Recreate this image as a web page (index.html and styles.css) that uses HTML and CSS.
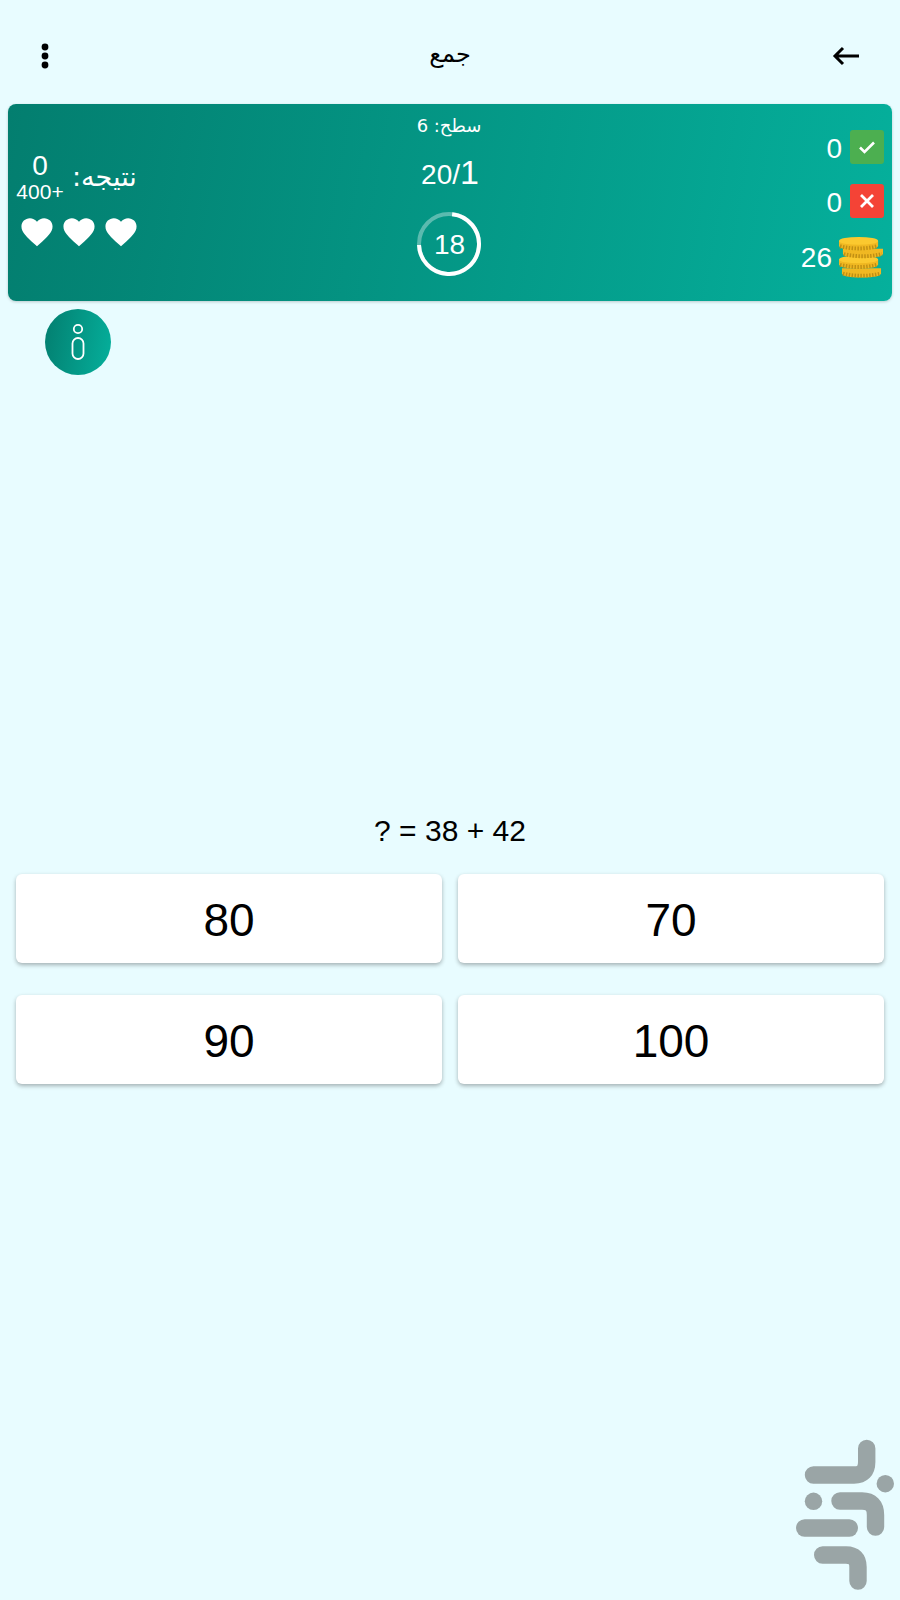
FILE: index.html
```html
<!DOCTYPE html>
<html lang="fa">
<head>
    <meta charset="UTF-8">
    <meta name="viewport" content="width=device-width, initial-scale=1.0">
    <title>جمع</title>
    <link rel="stylesheet" href="styles.css">
</head>
<body>
<div class="page">
    <header class="topbar">
        <svg class="menu-icon" width="10" height="28" viewBox="0 0 10 28">
            <circle cx="5" cy="5" r="3.4"/>
            <circle cx="5" cy="14" r="3.4"/>
            <circle cx="5" cy="23" r="3.4"/>
        </svg>
        <h1 class="title">جمع</h1>
        <svg class="back-icon" width="28" height="22" viewBox="0 0 28 22">
            <path d="M27 11H3M11 3l-8 8 8 8" fill="none" stroke="#000" stroke-width="3"/>
        </svg>
    </header>

    <section class="banner">
        <div class="score-col">
            <div class="score-row">
                <div class="score-nums">
                    <span class="score">0</span>
                    <span class="bonus">400+</span>
                </div>
                <span class="score-label" dir="rtl">نتیجه:</span>
            </div>
            <div class="hearts">
                <svg width="32" height="29" viewBox="0 0 24 22"><path d="M12 21.5 10.3 20C4.2 14.5 0.2 10.9 0.2 6.5 0.2 2.9 3 0.2 6.6 0.2c2 0 3.999 1 5.4 2.6C13.4 1.2 15.4 0.2 17.4 0.2c3.6 0 6.4 2.7 6.4 6.3 0 4.4-4 8-10.1 13.5z" fill="#fff"/></svg>
                <svg width="32" height="29" viewBox="0 0 24 22"><path d="M12 21.5 10.3 20C4.2 14.5 0.2 10.9 0.2 6.5 0.2 2.9 3 0.2 6.6 0.2c2 0 3.999 1 5.4 2.6C13.4 1.2 15.4 0.2 17.4 0.2c3.6 0 6.4 2.7 6.4 6.3 0 4.4-4 8-10.1 13.5z" fill="#fff"/></svg>
                <svg width="32" height="29" viewBox="0 0 24 22"><path d="M12 21.5 10.3 20C4.2 14.5 0.2 10.9 0.2 6.5 0.2 2.9 3 0.2 6.6 0.2c2 0 3.999 1 5.4 2.6C13.4 1.2 15.4 0.2 17.4 0.2c3.6 0 6.4 2.7 6.4 6.3 0 4.4-4 8-10.1 13.5z" fill="#fff"/></svg>
            </div>
        </div>

        <div class="level-col">
            <div class="level" dir="rtl">سطح: 6</div>
            <div class="progress">20/<span class="progress-now">1</span></div>
            <div class="timer">
                <svg width="66" height="66" viewBox="0 0 66 66">
                    <circle cx="33" cy="33" r="30" fill="none" stroke="rgba(255,255,255,0.35)" stroke-width="4"/>
                    <circle cx="33" cy="33" r="30" fill="none" stroke="#fff" stroke-width="4" stroke-dasharray="137 189" transform="rotate(-84 33 33)"/>
                </svg>
                <span class="timer-num">18</span>
            </div>
        </div>

        <div class="stats-col">
            <div class="stat">
                <span class="stat-num">0</span>
                <span class="stat-box box-ok">
                    <svg width="20" height="20" viewBox="0 0 20 20"><path d="M3 10.500l4.500 4.500L17 5.500" fill="none" stroke="#fff" stroke-width="2.600"/></svg>
                </span>
            </div>
            <div class="stat">
                <span class="stat-num">0</span>
                <span class="stat-box box-bad">
                    <svg width="20" height="20" viewBox="0 0 20 20"><path d="M4 4l12 12M16 4L4 16" fill="none" stroke="#fff" stroke-width="2.800"/></svg>
                </span>
            </div>
            <div class="stat stat-coins">
                <span class="stat-num">26</span>
                <svg class="coins" width="45" height="43" viewBox="0 0 46 44">
                    <path d="M3 33h40v5c0 3-9 4.500-20 4.500S3 41 3 38z" fill="#f0b822"/>
                    <path d="M4 38.500Q23 43 42 38.500" fill="none" stroke="#c08f14" stroke-width="4" stroke-dasharray="1.500 1.500"/>
                    <path d="M0 24h40v5c0 3-9 4.500-20 4.500S0 32 0 29z" fill="#f0b822"/>
                    <path d="M1 29.500Q20 34 39 29.500" fill="none" stroke="#c08f14" stroke-width="4" stroke-dasharray="1.500 1.500"/>
                    <ellipse cx="20" cy="24" rx="20" ry="4" fill="#fbc92f"/>
                    <path d="M4 13h41v5c0 3-9 4.500-20.500 4.500S4 21 4 18z" fill="#f0b822"/>
                    <path d="M5 18.500Q24.500 23 44 18.500" fill="none" stroke="#c08f14" stroke-width="4" stroke-dasharray="1.500 1.500"/>
                    <path d="M0 5h40v5c0 3-9 4.500-20 4.500S0 13 0 10z" fill="#f0b822"/>
                    <path d="M1 10.500Q20 15 39 10.500" fill="none" stroke="#c08f14" stroke-width="4" stroke-dasharray="1.500 1.500"/>
                    <ellipse cx="20" cy="5" rx="20" ry="4" fill="#fbc92f"/>
                </svg>
            </div>
        </div>
    </section>

    <div class="info-wrap">
        <div class="info-btn">
            <svg width="16" height="38" viewBox="0 0 16 38">
                <circle cx="8" cy="6" r="4.200" fill="none" stroke="#fff" stroke-width="1.800"/>
                <rect x="2.500" y="15" width="11" height="21" rx="5.500" fill="none" stroke="#fff" stroke-width="1.800"/>
            </svg>
        </div>
    </div>

    <div class="question">? = 38 + 42</div>

    <div class="answers">
        <button class="answer">80</button>
        <button class="answer">70</button>
        <button class="answer">90</button>
        <button class="answer">100</button>
    </div>

    <svg class="watermark" width="120" height="180" viewBox="0 0 120 180">
        <g fill="none" stroke="#9aa5a6" stroke-width="17.400" stroke-linecap="round">
            <path d="M86.700 28.500V42Q86.700 55 74 55H33.500"/>
            <path d="M60 81H82Q95.500 81 95.500 95V107"/>
            <path d="M24.700 108H69.300"/>
            <path d="M42.700 135H66Q78 135 78 147V161"/>
        </g>
        <circle cx="105.300" cy="63.700" r="8.700" fill="#9aa5a6"/>
        <circle cx="33.500" cy="81.300" r="8.700" fill="#9aa5a6"/>
    </svg>
</div>
</body>
</html>
```

FILE: styles.css
```css
body {
    margin: 0;
    padding: 0;
    font-family: "Liberation Sans", "DejaVu Sans", sans-serif;
    background-color: #e8fcff;
    color: #000;
}

.page {
    position: relative;
    height: 1600px;
    overflow: hidden;
}

.topbar {
    display: grid;
    grid-template-columns: 1fr auto 1fr;
    align-items: center;
    height: 104px;
    padding: 8px 40px 0 40px;
    box-sizing: border-box;
}

.title {
    margin: 0 0 4px;
    font-family: "DejaVu Sans", sans-serif;
    font-size: 24px;
    font-weight: normal;
}

.back-icon {
    justify-self: end;
}

.banner {
    display: grid;
    grid-template-columns: 1fr 1fr 1fr;
    height: 197px;
    margin: 0 8px;
    padding: 0 8px;
    background: linear-gradient(100deg, #037e6f, #05b09c);
    border-radius: 8px;
    box-shadow: 0 1px 3px rgba(0, 0, 0, 0.2);
    color: #fff;
}

.score-col {
    padding-top: 47px;
}

.score-row {
    display: flex;
    align-items: center;
    gap: 8px;
}

.score-nums {
    display: flex;
    flex-direction: column;
    align-items: center;
    width: 48px;
}

.score {
    font-size: 28px;
    line-height: 30px;
}

.bonus {
    font-size: 21px;
    line-height: 22px;
}

.score-label {
    font-family: "DejaVu Sans", sans-serif;
    font-size: 27px;
    line-height: 30px;
}

.hearts {
    display: flex;
    gap: 10px;
    margin: 15px 0 0 5px;
}

.level-col {
    display: flex;
    flex-direction: column;
    align-items: center;
    padding-top: 8px;
}

.level {
    margin-left: -2px;
    font-family: "DejaVu Sans", sans-serif;
    font-size: 18px;
    line-height: 28px;
}

.progress {
    margin-top: 13px;
    font-size: 28px;
    line-height: 38px;
}

.progress-now {
    font-size: 34px;
}

.timer {
    position: relative;
    display: flex;
    align-items: center;
    justify-content: center;
    width: 66px;
    height: 66px;
    margin: 17px 0 0 -1px;
}

.timer svg {
    position: absolute;
    top: 0;
    left: 0;
}

.timer-num {
    padding-top: 2px;
    font-size: 28px;
}

.stats-col {
    display: flex;
    flex-direction: column;
    align-items: flex-end;
    padding-top: 26px;
}

.stat {
    display: flex;
    align-items: center;
    gap: 8px;
    height: 34px;
    margin-bottom: 20px;
}

.stat-num {
    margin-top: 4px;
    font-size: 28px;
}

.stat-box {
    display: flex;
    align-items: center;
    justify-content: center;
    width: 34px;
    height: 34px;
    border-radius: 3px;
}

.box-ok {
    background: #4caf50;
}

.box-bad {
    background: #f44336;
}

.stat-coins {
    gap: 7px;
    margin-top: 2px;
}

.stat-coins .stat-num {
    margin-top: 2px;
}

.info-wrap {
    padding: 8px 0 0 45px;
}

.info-btn {
    display: flex;
    align-items: center;
    justify-content: center;
    width: 66px;
    height: 66px;
    border-radius: 50%;
    background: linear-gradient(100deg, #037e6f, #05b09c);
}

.question {
    margin-top: 436px;
    font-size: 30px;
    line-height: 40px;
    text-align: center;
}

.answers {
    display: grid;
    grid-template-columns: 1fr 1fr;
    gap: 32px 16px;
    margin-top: 23px;
    padding: 0 16px;
}

.answer {
    height: 89px;
    padding: 3px 0 0;
    font-family: "Liberation Sans", sans-serif;
    font-size: 46px;
    color: #000;
    background: #fff;
    border: none;
    border-radius: 6px;
    box-shadow: 0 2px 4px rgba(0, 0, 0, 0.3);
}

.watermark {
    position: absolute;
    right: 0;
    bottom: 0;
}
```
